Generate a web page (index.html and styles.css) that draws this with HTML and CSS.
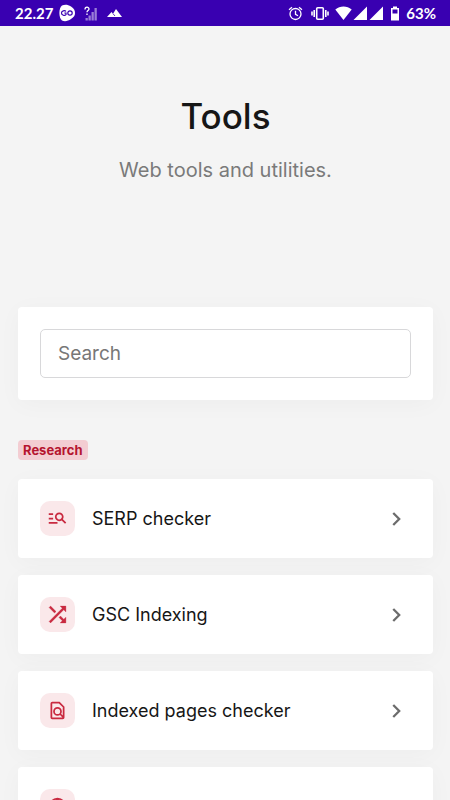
FILE: index.html
```html
<!DOCTYPE html>
<html lang="en">
<head>
<meta charset="utf-8">
<meta name="viewport" content="width=device-width, initial-scale=1">
<title>Tools</title>
<link rel="stylesheet" href="styles.css">
</head>
<body>
<div class="status">
  <div class="status-group">
    <span>22.27</span>
    <svg class="go" width="18" height="18" viewBox="0 0 18 18"><path d="M4 1.500C7 0 10 .5 13 2.500c3 2 4 4 4 6.500s-1 4-4 6c-3 2-6 3-9 1.500C.5 14 .5 4 4 1.500z" fill="#fff"/><path d="M8 7.400C6.800 6.200 3.500 6.500 3.500 9s3.300 3 4.500 1.700V9H6.300" fill="none" stroke="#3900b1" stroke-width="1.200"/><circle cx="12" cy="9" r="2.200" fill="none" stroke="#3900b1" stroke-width="1.200"/></svg>
    <svg class="sim" width="14" height="15" viewBox="0 0 14 15"><path d="M1.500 12h2.300v2.500H1.500zM4.500 9.500h2.300v5H4.500zM7.500 6h2.300v8.500H7.500zM10.500 2h2.300v12.500h-2.300z" fill="#9a7dd8"/><path d="M1 3.500C1 .5 5 .6 5 3c0 1.600-2 1.500-2 3.200M3 7.500V9" fill="none" stroke="#fff" stroke-width="1.300"/></svg>
    <svg class="peaks" width="15" height="10" viewBox="0 0 15 10"><path d="M0 9l4.500-5L6 5.700 9 1l6 8z" fill="#fff"/><path d="M6 5.700L8 8" stroke="#3900b1" stroke-width=".8"/></svg>
  </div>
  <div class="status-group">
    <svg width="15" height="15" viewBox="0 0 15 15" fill="none" stroke="#fff" stroke-width="1.300"><circle cx="7.500" cy="8" r="5.500"/><path d="M7.500 4.800V8.300l2.500 1.500M1 3.700L4 1.200M14 3.700l-3-2.500"/></svg>
    <svg class="vibrate" width="18" height="15" viewBox="0 0 18 15" fill="none" stroke="#fff" stroke-width="1.600"><rect x="5.700" y="1.700" width="6.600" height="11.600" rx="1"/><path d="M3.200 4v7M1 5.500v4M14.800 4v7M17 5.500v4"/></svg>
    <svg width="17" height="14" viewBox="0 0 17 14"><path d="M.3 3.600C5-.6 12-.6 16.700 3.600L8.500 14z" fill="#fff"/></svg>
    <svg width="16" height="14" viewBox="0 0 16 14"><path d="M1.500 14L15 .5V14z" fill="#fff"/></svg>
    <svg width="16" height="14" viewBox="0 0 16 14"><path d="M1.500 14L15 .5V14z" fill="#fff"/></svg>
    <svg class="battery" width="10" height="15" viewBox="0 0 10 15"><path d="M3 .5h4V2h2v12.500H1V2h2zM2.500 3.500v4h5v-4z" fill="#fff" fill-rule="evenodd"/></svg>
    <span>63%</span>
  </div>
</div>
<main>
  <header class="hero">
    <h1>Tools</h1>
    <p>Web tools and utilities.</p>
  </header>
  <form class="card search">
    <input type="search" placeholder="Search" aria-label="Search">
  </form>
  <h2 class="badge">Research</h2>
  <nav class="list">
    <a class="card tool" href="#">
      <span class="icon"><svg viewBox="0 1 24 24" fill="currentColor"><path d="M7 9H2V7h5v2zm0 3H2v2h5v-2zm13.590 7l-3.830-3.830c-.8.520-1.740.830-2.760.830-2.760 0-5-2.240-5-5s2.240-5 5-5 5 2.240 5 5c0 1.020-.31 1.960-.83 2.750L22 17.590 20.590 19zM17 11c0-1.650-1.350-3-3-3s-3 1.350-3 3 1.350 3 3 3 3-1.350 3-3zM2 19h10v-2H2v2z"/></svg></span>
      <span class="name">SERP checker</span>
      <svg class="chevron" viewBox="0 0 24 24"><path d="M9 5.500l6.500 6.500L9 18.500"/></svg>
    </a>
    <a class="card tool" href="#">
      <span class="icon"><svg viewBox="2 2 20 20" fill="currentColor"><path d="M10.590 9.170L5.410 4 4 5.410l5.170 5.170 1.420-1.410zM14.500 4l2.040 2.040L4 18.590 5.410 20 17.960 7.460 20 9.500V4h-5.500zm.33 9.410l-1.410 1.410 3.130 3.130L14.500 20H20v-5.500l-2.040 2.040-3.130-3.130z" stroke="currentColor" stroke-width=".3"/></svg></span>
      <span class="name">GSC Indexing</span>
      <svg class="chevron" viewBox="0 0 24 24"><path d="M9 5.500l6.500 6.500L9 18.500"/></svg>
    </a>
    <a class="card tool" href="#">
      <span class="icon"><svg viewBox="0 0 24 24" fill="none" stroke="currentColor" stroke-width="2"><path d="M6 3h8l5 5v12a1 1 0 0 1-1 1H6a1 1 0 0 1-1-1V4a1 1 0 0 1 1-1zM15 16l4.500 4.500"/><circle cx="12" cy="13" r="4"/></svg></span>
      <span class="name">Indexed pages checker</span>
      <svg class="chevron" viewBox="0 0 24 24"><path d="M9 5.500l6.500 6.500L9 18.500"/></svg>
    </a>
    <a class="card tool" href="#">
      <span class="icon"><svg viewBox="0 0 24 24" fill="none" stroke="currentColor" stroke-width="2"><circle cx="12" cy="12" r="9"/><path d="M3 12h18M12 3c-5 5-5 13 0 18M12 3c5 5 5 13 0 18"/></svg></span>
      <span class="name"></span>
      <svg class="chevron" viewBox="0 0 24 24"><path d="M9 5.500l6.500 6.500L9 18.500"/></svg>
    </a>
  </nav>
</main>
</body>
</html>
```
FILE: styles.css
```css
* {
  box-sizing: border-box;
}

html {
  scrollbar-width: none;
}

body {
  margin: 0;
  background: #f4f4f4;
  color: #161616;
  font-family: Inter, "Liberation Sans", sans-serif;
}

.status {
  display: flex;
  justify-content: space-between;
  align-items: center;
  height: 26px;
  padding: 0 14px 0 15px;
  background: #3900b1;
  color: #fff;
  font: 700 15px/26px Lato, sans-serif;
}

.status-group {
  display: flex;
  align-items: center;
}

.go {
  margin-left: 5px;
}

.sim {
  margin-left: 8px;
}

.peaks {
  margin-left: 9px;
}

.vibrate {
  margin: 0 6px 0 8px;
}

.battery {
  margin: 0 6px;
}

main {
  padding: 0 17px 18px 18px;
}

.hero {
  padding: 68px 0 122px;
  text-align: center;
}

h1 {
  margin: 0;
  font-size: 35px;
  font-weight: 500;
  line-height: 44px;
}

.hero p {
  margin: 17px 0 0;
  color: #7a7a7a;
  font-size: 20px;
  line-height: 30px;
}

.card {
  border-radius: 4px;
  background: #fff;
  box-shadow: 0 4px 24px rgba(0, 0, 0, 0.03);
}

.search {
  padding: 22px;
}

.search input {
  display: block;
  width: 100%;
  height: 49px;
  padding: 0 17px;
  border: 1px solid #d8d8da;
  border-radius: 5px;
  background: #fff;
  color: #161616;
  font: 400 19px/30px Inter, sans-serif;
  appearance: none;
}

.search input::placeholder {
  color: #777;
}

.badge {
  width: fit-content;
  margin: 40px 0 19px;
  padding: 0 5px;
  border-radius: 4px;
  background: #f3cdd2;
  color: #b5152f;
  font-size: 13px;
  font-weight: 700;
  line-height: 20px;
}

.list {
  display: grid;
  gap: 17px;
}

.tool {
  display: flex;
  align-items: center;
  gap: 17px;
  padding: 22px 26px 22px 22px;
  color: inherit;
  font-size: 18px;
  font-weight: 400;
  line-height: 26px;
  text-decoration: none;
}

.icon {
  display: grid;
  place-items: center;
  width: 35px;
  height: 35px;
  border-radius: 10px;
  background: #fae8ea;
  color: #c92a40;
}

.icon svg {
  width: 21px;
  height: 21px;
}

.name {
  flex: 1;
}

.chevron {
  width: 22px;
  height: 22px;
  fill: none;
  stroke: #6c6c6c;
  stroke-width: 2.5;
}
```
